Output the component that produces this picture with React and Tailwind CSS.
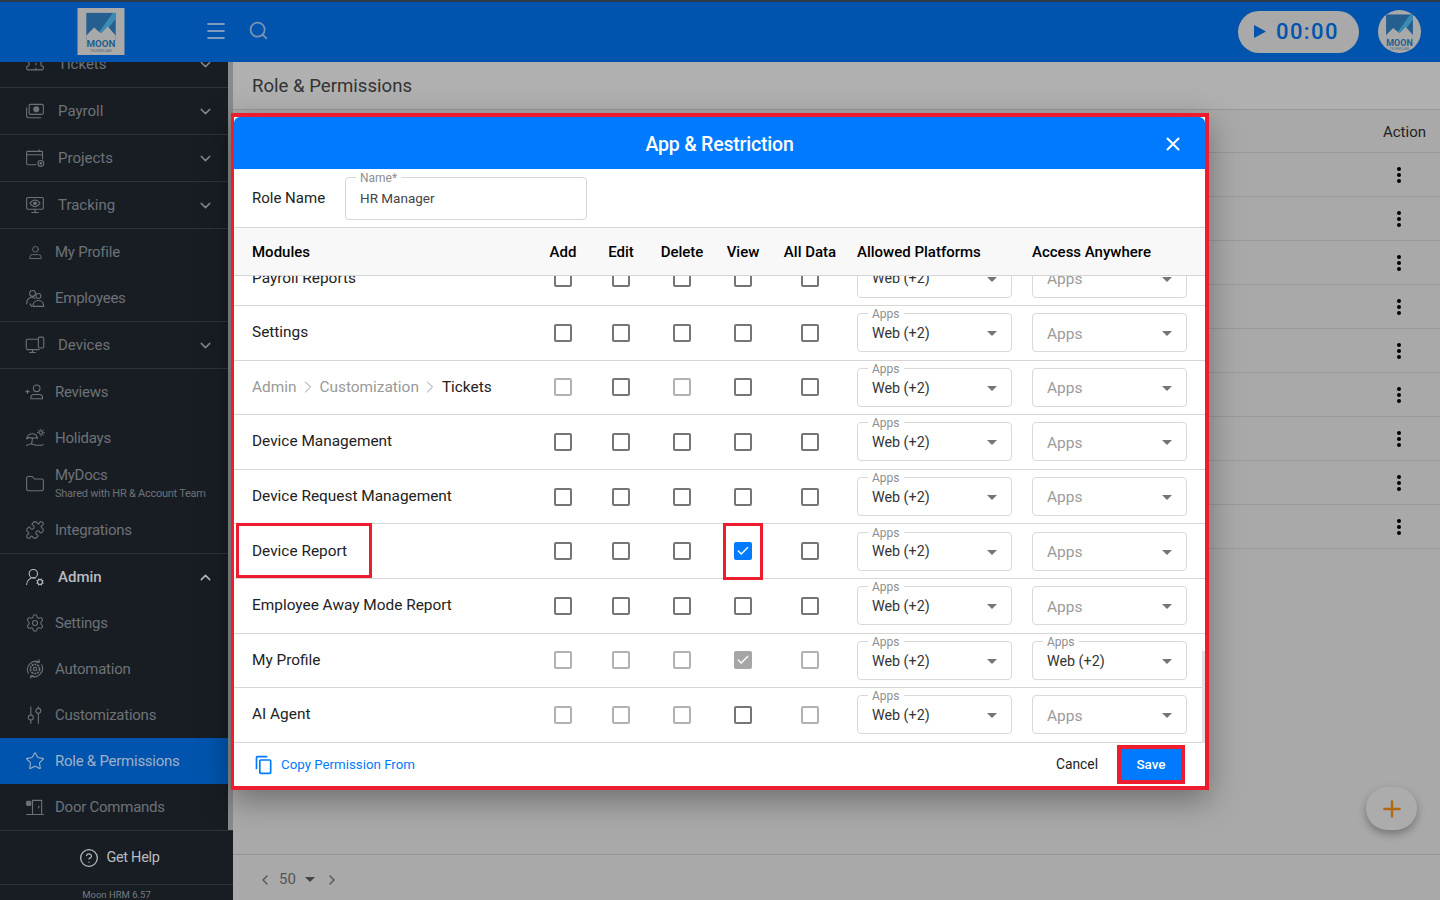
import React from "react";
import { ChevronDown, ChevronUp, ChevronLeft, ChevronRight, Ticket, Folder, Puzzle, UserRoundCog, Settings, Star, CircleHelp, Menu, Search, X, Plus, Check } from "lucide-react";

const Svg = ({ size = 20, strokeWidth = 1.4, className, children }) => (
  <svg width={size} height={size} viewBox="0 0 24 24" fill="none" stroke="currentColor" strokeWidth={strokeWidth} strokeLinecap="round" strokeLinejoin="round" className={className}>{children}</svg>
);
const Payroll = (p) => (
  <Svg {...p}>
    <rect x="5" y="4" width="17" height="12" rx="1.500" />
    <circle cx="13.500" cy="10" r="3" fill="currentColor" />
    <path d="M2 8v10a2 2 0 0 0 2 2h15" />
  </Svg>
);
const Tracking = (p) => (
  <Svg {...p}>
    <rect x="2" y="3" width="20" height="14" rx="1.500" />
    <path d="M6 10s2.500-4 6-4 6 4 6 4-2.500 4-6 4-6-4-6-4z" />
    <circle cx="12" cy="10" r="1.600" fill="currentColor" />
    <path d="M12 17v3M8 21h8" />
  </Svg>
);
const Projects = (p) => (
  <Svg {...p}>
    <path d="M13 20H3a1 1 0 0 1-1-1V5a1 1 0 0 1 1-1h17a1 1 0 0 1 1 1v8" />
    <path d="M2 8h19M17 2v2" />
    <circle cx="19" cy="18.500" r="3.500" />
    <circle cx="19" cy="18.500" r="1" />
  </Svg>
);
const Devices = (p) => (
  <Svg {...p}>
    <path d="M15 5H3a1.500 1.500 0 0 0-1.500 1.500V16A1.500 1.500 0 0 0 3 17.500h14" />
    <path d="M9 17.500V21M5.500 21h7" />
    <rect x="16" y="2.500" width="6.500" height="13" rx="1.500" />
  </Svg>
);
const Profile = (p) => (
  <Svg {...p}>
    <circle cx="12" cy="7.500" r="4" />
    <path d="M4 20v-1.500A3.500 3.500 0 0 1 7.500 15h9a3.500 3.500 0 0 1 3.500 3.500V20z" />
  </Svg>
);
const Employees = (p) => (
  <Svg {...p}>
    <circle cx="9" cy="6.500" r="3.500" />
    <circle cx="16" cy="9.500" r="3" />
    <path d="M2 19c0-5 3-8 6-8 1.500 0 2.500.5 3.500 1.500" />
    <path d="M9.500 22c0-4 2.500-7 6.500-7s6.500 3 6.500 7z" />
    <path d="M6 19l2 3" />
  </Svg>
);
const Reviews = (p) => (
  <Svg {...p}>
    <circle cx="14" cy="7.500" r="4" />
    <path d="M7 20v-1.500A3.500 3.500 0 0 1 10.500 15h7a3.500 3.500 0 0 1 3.500 3.500V20z" />
    <path d="M3 9.500v4M1 11.500h4" />
  </Svg>
);
const Holidays = (p) => (
  <Svg {...p}>
    <path d="M2 13c.5-4 4-6.500 7.500-6 3 .5 5 2.500 5.500 5.500-3-1.500-4-1-5.500 0-2-1-5-1.500-7.500.5z" />
    <path d="M9 12l-1 7M2 21c3-2.500 6-2 9-1 3 1 7 1 11 0" />
    <circle cx="19" cy="5.500" r="2" />
    <path d="M19 1.500v.5M19 9v.5M15 5.500h.5M22.500 5.500h.5M16.200 2.700l.3.3M21.500 8l.3.3M21.800 2.700l-.3.3" />
  </Svg>
);
const Automation = (p) => (
  <Svg {...p}>
    <path d="M4 17a10 10 0 0 1 13-13.500M20 7a10 10 0 0 1-13 13.500" />
    <path d="M17 1v3h-3M7 23v-3h3" />
    <circle cx="12" cy="12" r="5.500" strokeDasharray="2.500 1" strokeWidth="2" strokeLinecap="butt" />
    <circle cx="12" cy="12" r="2" />
  </Svg>
);
const Customs = (p) => (
  <Svg {...p}>
    <path d="M7 2v10M7 18v4M16 2v2M16 10v12" />
    <circle cx="7" cy="15" r="3" />
    <circle cx="16" cy="7" r="3" />
  </Svg>
);
const Door = (p) => (
  <Svg {...p}>
    <path d="M2 21h20M9 21V4h11v17" />
    <path d="M16.500 11v2" />
    <rect x="2" y="5" width="5" height="5" rx="1" fill="currentColor" />
  </Svg>
);

function Logo() {
  return (
    <svg viewBox="0 0 48 48" className="w-full h-full">
      <rect x="0" y="0" width="48" height="48" fill="#a9a9a9" />
      <rect x="9" y="5" width="30" height="28" fill="#245f90" />
      <path d="M22 33 39 11V5h-3L16 33z" fill="#3a8cb4" />
      <path d="M9 28 17 20l7 6 7-7 8 9v6H9z" fill="#a9a9a9" />
      <text x="24" y="40" textAnchor="middle" fontSize="10" fontWeight="700" fill="#1f5f90" fontFamily="Roboto, sans-serif">MOON</text>
      <text x="24" y="45" textAnchor="middle" fontSize="3.500" fill="#4a6a80" fontFamily="Roboto, sans-serif">TECHNOLABS</text>
    </svg>
  );
}

const NAV = [
  { t: "Payroll", I: Payroll, c: 1, b: 1 },
  { t: "Projects", I: Projects, c: 1, b: 1 },
  { t: "Tracking", I: Tracking, c: 1, b: 1 },
  { t: "My Profile", I: Profile, small: 1 },
  { t: "Employees", I: Employees, b: 1 },
  { t: "Devices", I: Devices, c: 1, b: 1 },
  { t: "Reviews", I: Reviews },
  { t: "Holidays", I: Holidays },
  { t: "MyDocs", I: Folder, sub: "Shared with HR & Account Team" },
  { t: "Integrations", I: Puzzle, b: 1 },
  { t: "Admin", I: UserRoundCog, open: 1, big: 1 },
  { t: "Settings", I: Settings },
  { t: "Automation", I: Automation },
  { t: "Customizations", I: Customs },
  { t: "Role & Permissions", I: Star, active: 1 },
  { t: "Door Commands", I: Door },
];

function NavRow({ n }) {
  const h = n.b ? "h-[47px] border-b border-[#2e3339]" : "h-[46px]";
  const bg = n.active ? "bg-[#0054ad] text-[#9fb0c6]" : n.big ? "text-[#b9bcbf]" : "text-[#6d7277]";
  const I = n.I;
  const collapsible = n.c || n.open;
  return (
    <div className={`relative flex items-center shrink-0 pl-[25px] pr-[14px] ${h} ${bg}`}>
      <div className="w-[20px] flex justify-center shrink-0">
        <I size={n.small ? 17 : 20} strokeWidth={1.3} />
      </div>
      {n.sub ? (
        <div className="ml-[10px] flex flex-col -mt-[1px]">
          <span className="text-[15px] leading-[19px] tracking-[-0.3px]">{n.t}</span>
          <span className="text-[11px] leading-[14px] tracking-[-0.25px] whitespace-nowrap mt-[2px]">{n.sub}</span>
        </div>
      ) : (
        <span className={`${collapsible ? "ml-[13px] tracking-[0px]" : "ml-[10px] tracking-[-0.25px]"} text-[15px] whitespace-nowrap ${n.big ? "font-medium" : ""}`}>{n.t}</span>
      )}
      {n.c && <ChevronDown size={17} className="ml-auto text-[#80858a]" />}
      {n.open && <ChevronUp size={17} className="ml-auto text-[#b9bcbf]" />}
    </div>
  );
}

function Box({ s }) {
  if (s === "c") return <div className="w-[18px] h-[18px] rounded-[2px] bg-[#007bff] flex items-center justify-center"><Check size={14} strokeWidth={2.4} className="text-white" /></div>;
  if (s === "g") return <div className="w-[18px] h-[18px] rounded-[2px] bg-[#a6a6a6] flex items-center justify-center"><Check size={14} strokeWidth={2.4} className="text-white" /></div>;
  return <div className={`w-[18px] h-[18px] rounded-[2px] border-2 ${s === "l" ? "border-[#b2b2b2]" : "border-[#757575]"}`} />;
}

function Caret({ cls = "border-t-[#757575]" }) {
  return <span className={`block w-0 h-0 border-l-[5px] border-r-[5px] border-t-[5px] border-l-transparent border-r-transparent ${cls}`} />;
}

function Sel({ on }) {
  return (
    <div className="relative w-[155px] h-[39px] rounded-[4px] border border-[#d9d9d9] flex items-center justify-between pl-[14px] pr-[14px]">
      {on ? (
        <>
          <span className="absolute left-[10px] -top-[6px] bg-white px-[4px] text-[12px] leading-[12px] text-[#8e8e8e]">Apps</span>
          <span className="text-[14.3px] text-[#333] mt-[2px]">Web (+2)</span>
        </>
      ) : (
        <span className="text-[15.5px] text-[#9b9b9b] mt-[3px]">Apps</span>
      )}
      <span className="mt-[2px]"><Caret /></span>
    </div>
  );
}

const ROWS = [
  { n: "Payroll Reports", b: "ddddd", a: 0 },
  { n: "Settings", b: "ddddd", a: 0 },
  { crumb: 1, b: "ldldd", a: 0 },
  { n: "Device Management", b: "ddddd", a: 0 },
  { n: "Device Request Management", b: "ddddd", a: 0 },
  { n: "Device Report", b: "dddcd", a: 0 },
  { n: "Employee Away Mode Report", b: "ddddd", a: 0 },
  { n: "My Profile", b: "lllgl", a: 1 },
  { n: "AI Agent", b: "llldl", a: 0 },
];

const GRID = "grid grid-cols-[281px_60px_56px_66px_56px_78px_163px_175px] items-center pl-[18px]";

export default function App() {
  return (
    <div className="relative w-[1440px] h-[900px] overflow-hidden flex flex-col font-[Roboto,sans-serif] bg-[#a9a9a9]">
      <header className="relative z-10 h-[62px] shrink-0 bg-[#0054ad] border-t-2 border-[#2f3a46] flex items-center">
        <div className="ml-[77px] -mt-[2px] w-[48px] h-[47px] shrink-0"><Logo /></div>
        <Menu size={24} strokeWidth={1.6} className="ml-[79px] -mt-[2px] text-[#a9b4c2]" />
        <Search size={21} strokeWidth={2} className="ml-[20px] -mt-[3px] text-[#7a93b5]" />
        <div className="ml-auto flex items-center gap-[19px] pr-[19px] -mt-[1px]">
          <div className="w-[121px] h-[42px] rounded-full bg-[#a9a9a9] flex items-center pl-[16px] gap-[10px] text-[#0054ad]">
            <svg width="12" height="13" viewBox="0 0 12 13"><path d="M0 0l12 6.500L0 13z" fill="#0054ad" /></svg>
            <span className="text-[22px] font-medium tracking-[1.4px]">00:00</span>
          </div>
          <div className="w-[43px] h-[43px] rounded-full overflow-hidden shrink-0"><Logo /></div>
        </div>
      </header>

      <div className="flex-1 flex min-h-0">
        <aside className="w-[233px] shrink-0 bg-[#181d23] flex flex-col">
          <div className="h-[768px] shrink-0 flex overflow-hidden">
            <div className="w-[228px] shrink-0 flex flex-col">
              <div className="h-[47px] shrink-0 -mt-[21px] border-b border-[#2e3339] flex items-center pl-[25px] pr-[14px] text-[#6d7277]">
                <div className="w-[20px] flex justify-center"><Ticket size={20} strokeWidth={1.3} /></div>
                <span className="ml-[13px] text-[15px]">Tickets</span>
                <ChevronDown size={17} className="ml-auto text-[#80858a]" />
              </div>
              {NAV.map((n) => <NavRow key={n.t} n={n} />)}
            </div>
            <div className="w-[5px] bg-[#8a8a8a]" />
          </div>
          <div className="h-[55px] shrink-0 border-t border-b border-[#2e3339] flex items-center justify-center gap-[7px] pl-[6px] text-[#b9bcbf]">
            <CircleHelp size={20} strokeWidth={1.5} />
            <span className="text-[14.5px] tracking-[-0.3px]">Get Help</span>
          </div>
          <div className="flex-1 flex items-center justify-center text-[9.5px] text-[#777b80] pt-[3px]">Moon HRM 6.57</div>
        </aside>

        <main className="flex-1 min-w-0 flex flex-col">
          <div className="h-[48px] shrink-0 border-b border-[#999] bg-[#b0b0b0] flex items-center pl-[19px] pt-[2px]">
            <span className="text-[18.6px] text-[#333]">Role &amp; Permissions</span>
          </div>
          <div className="h-[43px] shrink-0 border-b border-[#999] flex items-center justify-end pr-[14px] pt-[2px]">
            <span className="text-[15px] text-[#222]">Action</span>
          </div>
          {Array.from({ length: 9 }).map((_, i) => (
            <div key={i} className="h-[44px] shrink-0 border-b border-[#999] flex items-center justify-end pr-[39px]">
              <div className="flex flex-col gap-[2px]">
                <span className="w-[4px] h-[4px] rounded-full bg-black" />
                <span className="w-[4px] h-[4px] rounded-full bg-black" />
                <span className="w-[4px] h-[4px] rounded-full bg-black" />
              </div>
            </div>
          ))}
          <div className="flex-1" />
          <div className="h-[46px] shrink-0 border-t border-[#949494] flex items-center pl-[24px] pt-[4px] text-[#555]">
            <ChevronLeft size={16} />
            <span className="ml-[6px] text-[15px]">50</span>
            <span className="ml-[9px]"><Caret cls="border-t-[#444]" /></span>
            <ChevronRight size={16} className="ml-[9px]" />
          </div>
        </main>
      </div>

      <button className="absolute left-[1366px] top-[787px] w-[51px] h-[43px] rounded-[22px] bg-[#acacac] shadow-[0_4px_8px_rgba(0,0,0,0.3)] flex items-center justify-center">
        <Plus size={26} strokeWidth={2.2} className="text-[#b06a10]" />
      </button>

      <div className="absolute left-[231px] top-[113px] w-[978px] h-[677px] border-l-[3px] border-t-[4px] border-r-[4px] border-b-[4px] border-[#ed1c2e] bg-white flex flex-col shadow-[0_10px_30px_rgba(0,0,0,0.35)] z-20">
        <div className="h-[52px] shrink-0 bg-[#007bff] rounded-t-[6px] relative flex items-center justify-center text-white pt-[3px]">
          <span className="text-[19.5px] font-medium tracking-[-0.2px]">App &amp; Restriction</span>
          <X size={22} strokeWidth={2.2} className="absolute right-[21px] top-[16px]" />
        </div>
        <div className="h-[59px] shrink-0 border-b border-[#d6d6d6] flex items-center pl-[18px]">
          <span className="w-[93px] text-[15px] text-[#222] mt-[1px]">Role Name</span>
          <div className="relative w-[242px] h-[43px] rounded-[4px] border border-[#d6d6d6] flex items-center pl-[14px]">
            <span className="absolute left-[10px] -top-[6px] bg-white px-[4px] text-[12px] leading-[12px] text-[#8e8e8e]">Name*</span>
            <span className="text-[13.5px] text-[#444] mt-[1px]">HR Manager</span>
          </div>
        </div>
        <div className={`h-[48px] shrink-0 border-b border-[#d6d6d6] bg-[#f8f8f8] text-[15px] font-medium text-black pt-[2px] ${GRID}`}>
          <span>Modules</span>
          <span className="text-center">Add</span>
          <span className="text-center">Edit</span>
          <span className="text-center">Delete</span>
          <span className="text-center">View</span>
          <span className="text-center">All Data</span>
          <span className="pl-[8px]">Allowed Platforms</span>
          <span className="pl-[20px]">Access Anywhere</span>
        </div>
        <div className="relative h-[467px] shrink-0 overflow-hidden">
          <div className="-mt-[24.6px]">
            {ROWS.map((r, i) => (
              <div key={i} className={`h-[54.6px] border-b border-[#d6d6d6] ${GRID}`}>
                {r.crumb ? (
                  <span className="flex items-center text-[15.4px] text-[#999]">
                    Admin<ChevronRight size={20} strokeWidth={1.2} className="mx-[1.5px]" />Customization<ChevronRight size={20} strokeWidth={1.2} className="mx-[1.5px]" /><span className="text-[#222]">Tickets</span>
                  </span>
                ) : (
                  <span className="text-[15.4px] text-[#222]">{r.n}</span>
                )}
                {r.b.split("").map((s, j) => (
                  <div key={j} className="flex justify-center"><Box s={s} /></div>
                ))}
                <div className="pl-[8px]"><Sel on /></div>
                <div className="pl-[20px]"><Sel on={r.a === 1} /></div>
              </div>
            ))}
          </div>
          <div className="absolute right-0 bottom-0 w-[3px] h-[92px] bg-[#e2e2e2]" />
        </div>
        <div className="flex-1 flex items-center pl-[20px] pr-[24px]">
          <svg width="20" height="20" viewBox="0 0 24 24" fill="#007bff"><path d="M16 1H4c-1.100 0-2 .9-2 2v14h2V3h12V1zm3 4H8c-1.100 0-2 .9-2 2v14c0 1.100.9 2 2 2h11c1.100 0 2-.9 2-2V7c0-1.100-.9-2-2-2zm0 16H8V7h11v14z" /></svg>
          <span className="ml-[7px] text-[13.3px] text-[#007bff]">Copy Permission From</span>
          <span className="ml-auto text-[13.8px] text-[#222]">Cancel</span>
          <button className="ml-[23px] w-[60px] h-[32px] bg-[#007bff] text-white text-[13.5px] font-medium flex items-center justify-center">Save</button>
        </div>
      </div>

      <div className="absolute z-30 left-[236px] top-[523px] w-[136px] h-[55px] border-[3px] border-[#ed1c2e]" />
      <div className="absolute z-30 left-[723px] top-[523px] w-[40px] h-[57px] border-[3px] border-[#ed1c2e]" />
      <div className="absolute z-30 left-[1117px] top-[745px] w-[68px] h-[39px] border-[4px] border-[#ed1c2e]" />
    </div>
  );
}
